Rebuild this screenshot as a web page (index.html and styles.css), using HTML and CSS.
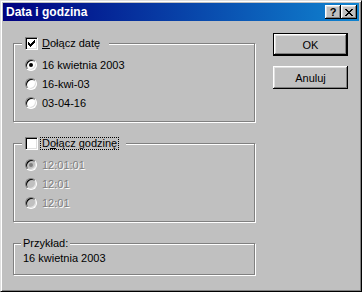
FILE: index.html
```html
<!DOCTYPE html>
<html lang="pl">

<head>
    <meta charset="UTF-8" />
    <title>Data i godzina</title>
    <link rel="stylesheet" href="styles.css">
</head>

<body>
    <div class="window">
        <div class="titlebar">
            <span class="title">Data i godzina</span>
            <div class="caption-buttons">
                <span class="cap-btn help">?</span>
                <span class="cap-btn close">
                    <svg width="8" height="7" viewBox="0 0 8 7" shape-rendering="crispEdges">
                        <path d="M0 0h2v1H0zM6 0h2v1H6zM1 1h2v1H1zM5 1h2v1H5zM2 2h4v1H2zM3 3h2v1H3zM2 4h4v1H2zM1 5h2v1H1zM5 5h2v1H5zM0 6h2v1H0zM6 6h2v1H6z" fill="#000" />
                    </svg>
                </span>
            </div>
        </div>

        <div class="client">
            <div class="groups">
                <div class="group choice">
                    <div class="legend">
                        <span class="check">
                            <svg width="7" height="7" viewBox="0 0 7 7" shape-rendering="crispEdges">
                                <path d="M0 2h1v3H0zM1 3h1v3H1zM2 4h1v3H2zM3 3h1v3H3zM4 2h1v3H4zM5 1h1v3H5zM6 0h1v3H6z" fill="#000" />
                            </svg>
                        </span>
                        <span class="label"><u>D</u>ołącz datę</span>
                    </div>
                    <div class="option"><span class="radio selected"></span>16 kwietnia 2003</div>
                    <div class="option"><span class="radio"></span>16-kwi-03</div>
                    <div class="option"><span class="radio"></span>03-04-16</div>
                </div>

                <div class="group choice">
                    <div class="legend">
                        <span class="check"></span>
                        <span class="label focused">D<u>o</u>łącz godzinę</span>
                    </div>
                    <div class="option disabled"><span class="radio selected"></span>12:01:01</div>
                    <div class="option disabled"><span class="radio"></span>12:01</div>
                    <div class="option disabled"><span class="radio"></span>12:01</div>
                </div>

                <div class="group sample">
                    <div class="legend text">Przykład:</div>
                    16 kwietnia 2003
                </div>
            </div>

            <div class="buttons">
                <button class="btn default">OK</button>
                <button class="btn">Anuluj</button>
            </div>
        </div>
    </div>
</body>

</html>
```

FILE: styles.css
```css
* {
    box-sizing: border-box;
}

body {
    margin: 0;
    background: #c0c0c0;
    font-family: "Liberation Sans", Arial, sans-serif;
    font-size: 11px;
    color: #000;
}

.window {
    width: 362px;
    height: 292px;
    padding: 2px;
    display: flex;
    flex-direction: column;
    background: #c0c0c0;
    border: 1px solid;
    border-color: #dfdfdf #000 #000 #dfdfdf;
    box-shadow: inset 1px 1px #fff, inset -1px -1px #808080;
}

.titlebar {
    flex: none;
    height: 18px;
    padding: 0 2px 0 3px;
    display: flex;
    align-items: center;
    justify-content: space-between;
    background: linear-gradient(90deg, #000080, #1084d0);
}

.title {
    color: #fff;
    font-weight: bold;
    font-size: 12px;
}

.caption-buttons {
    display: flex;
}

.cap-btn {
    width: 16px;
    height: 14px;
    display: flex;
    align-items: center;
    justify-content: center;
    background: #c0c0c0;
    box-shadow: inset -1px -1px #000, inset 1px 1px #fff, inset -2px -2px #808080, inset 2px 2px #dfdfdf;
}

.cap-btn.help {
    font-weight: bold;
    font-size: 11px;
    line-height: 14px;
    padding-bottom: 1px;
}

.client {
    flex: 1;
    display: flex;
}

.groups {
    padding: 22px 0 0 10px;
    display: flex;
    flex-direction: column;
    gap: 21px;
}

.group {
    position: relative;
    width: 242px;
    border: 1px solid #808080;
    box-shadow: inset 1px 1px #fff, 1px 1px #fff;
}

.choice {
    height: 79px;
    padding: 11px 0 9px 11px;
}

.sample {
    height: 32px;
    padding: 8px 0 0 9px;
    line-height: 13px;
}

.legend {
    position: absolute;
    top: -7px;
    left: 8px;
    height: 13px;
    padding: 0 7px 0 3px;
    display: flex;
    align-items: center;
    gap: 2px;
    background: #c0c0c0;
}

.legend.text {
    left: 7px;
    padding: 0 2px;
    line-height: 13px;
}

.check {
    flex: none;
    width: 13px;
    height: 13px;
    display: flex;
    align-items: center;
    justify-content: center;
    background: #fff;
    border: 1px solid;
    border-color: #808080 #fff #fff #808080;
    box-shadow: inset 1px 1px #000, inset -1px -1px #dfdfdf;
}

.label {
    padding: 0 1px;
    line-height: 11px;
    border: 1px dotted transparent;
}

.label.focused {
    border-color: #000;
}

.option {
    height: 19px;
    display: flex;
    align-items: center;
    gap: 5px;
}

.radio {
    position: relative;
    flex: none;
    width: 12px;
    height: 12px;
    border-radius: 50%;
    background: #fff;
    border: 1px solid;
    border-color: #808080 #fff #fff #808080;
    box-shadow: inset 1px 1px #000, inset -1px -1px #dfdfdf;
}

.radio.selected::after {
    content: "";
    position: absolute;
    left: 3px;
    top: 3px;
    width: 4px;
    height: 4px;
    border-radius: 50%;
    background: #000;
}

.disabled {
    color: #808080;
    text-shadow: 1px 1px #fff;
}

.disabled .radio {
    background: #c0c0c0;
}

.disabled .radio.selected::after {
    background: #808080;
}

.buttons {
    margin-left: 18px;
    padding-top: 12px;
    display: flex;
    flex-direction: column;
    gap: 10px;
}

.btn {
    width: 75px;
    height: 23px;
    padding: 0;
    font: inherit;
    color: #000;
    background: #c0c0c0;
    border: none;
    box-shadow: inset -1px -1px #000, inset 1px 1px #fff, inset -2px -2px #808080, inset 2px 2px #dfdfdf;
}

.btn.default {
    border: 1px solid #000;
}
```
